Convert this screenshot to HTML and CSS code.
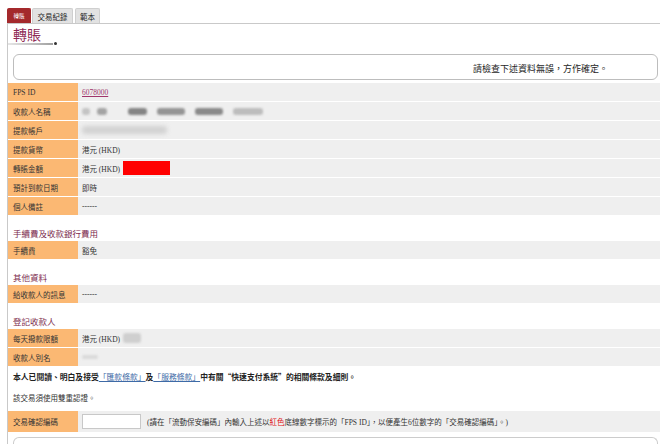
FILE: index.html
```html
<!DOCTYPE html>
<html lang="zh-Hant">
<head>
<meta charset="utf-8">
<title>轉賬</title>
<link rel="stylesheet" href="styles.css">
</head>
<body>
<div class="tabs">
  <span class="tab tab-active">轉賬</span>
  <span class="tab tab-history">交易紀錄</span>
  <span class="tab tab-template">範本</span>
</div>
<div class="panel">
  <h1 class="title">轉賬</h1>
  <div class="title-rule"><span class="rule-line"></span><span class="rule-dot"></span></div>
  <div class="notice">請檢查下述資料無誤，方作確定。</div>

  <div class="rows">
    <div class="row"><div class="label">FPS ID</div><div class="value"><a class="fps" href="#">6078000</a></div></div>
    <div class="row"><div class="label">收款人名稱</div><div class="value">
      <span class="blk n1"></span><span class="blk n2"></span><span class="blk n3"></span><span class="blk n4"></span><span class="blk n5"></span><span class="blk n6"></span>
    </div></div>
    <div class="row"><div class="label">提款帳戶</div><div class="value"><span class="blk acct"></span></div></div>
    <div class="row"><div class="label">提款貨幣</div><div class="value">港元 (HKD)</div></div>
    <div class="row"><div class="label">轉賬金額</div><div class="value">港元 (HKD)<span class="amount"></span></div></div>
    <div class="row"><div class="label">預計到款日期</div><div class="value">即時</div></div>
    <div class="row"><div class="label">個人備註</div><div class="value">------</div></div>
  </div>

  <h2 class="section">手續費及收款銀行費用</h2>
  <div class="rows">
    <div class="row"><div class="label">手續費</div><div class="value">豁免</div></div>
  </div>

  <h2 class="section">其他資料</h2>
  <div class="rows">
    <div class="row"><div class="label">給收款人的訊息</div><div class="value">------</div></div>
  </div>

  <h2 class="section">登記收款人</h2>
  <div class="rows">
    <div class="row"><div class="label">每天撥款限額</div><div class="value">港元 (HKD)<span class="blk limit"></span></div></div>
    <div class="row"><div class="label">收款人別名</div><div class="value"><span class="blk alias"></span></div></div>
  </div>

  <p class="statement">本人已閱讀、明白及接受<a class="terms" href="#">「匯款條款」</a>及<a class="terms" href="#">「服務條款」</a>中有關“快速支付系統”的相關條款及細則。</p>
  <p class="auth">該交易須使用雙重認證。</p>

  <div class="row row-code">
    <div class="label">交易確認編碼</div>
    <div class="value"><input class="code-input" type="text"><span class="hint">(請在「流動保安編碼」內輸入上述以<span class="red">紅色</span>底線數字標示的「FPS ID」，以便產生6位數字的「交易確認編碼」。)</span></div>
  </div>

  <div class="bottom-box"></div>
</div>
</body>
</html>
```
FILE: styles.css
```css
html, body {
  margin: 0;
  padding: 0;
  background: #ffffff;
}
body {
  font-family: "Liberation Serif", "Noto Sans CJK TC", serif;
  font-size: 7.5px;
  color: #333333;
  overflow: hidden;
}

/* tabs */
.tabs {
  display: flex;
  align-items: flex-end;
  margin: 8px 0 0 7px;
  height: 15px;
}
.tab {
  box-sizing: border-box;
  height: 15px;
  display: flex;
  align-items: center;
  justify-content: center;
  background: #e2e2e2;
  border: 1px solid #cfcfcf;
  border-bottom: none;
  border-radius: 2px 2px 0 0;
  font-family: "Noto Sans CJK TC", sans-serif;
  font-size: 7.5px;
  color: #222222;
}
.tab-active {
  width: 24px;
  background: #a4292c;
  border-color: #a4292c;
  color: #ffffff;
  font-size: 5.5px;
}
.tab-history {
  width: 41px;
  margin-left: 1px;
}
.tab-template {
  width: 25px;
  margin-left: 2px;
}

/* panel */
.panel {
  margin-left: 7px;
  border-left: 1px solid #c9c9c9;
  border-top: 1px solid #c9c9c9;
}
.title {
  margin: 0;
  padding: 2px 0 0 5px;
  font-family: "Noto Sans CJK TC", sans-serif;
  font-weight: normal;
  font-size: 14px;
  line-height: 16px;
  color: #8e2a55;
}
.title-rule {
  display: flex;
  align-items: center;
  height: 3px;
}
.rule-line {
  width: 45px;
  height: 2px;
  background: linear-gradient(to right, #e6e6e6, #a0a0a0);
}
.rule-dot {
  width: 3px;
  height: 3px;
  border-radius: 50%;
  background: #333333;
  margin-left: 1px;
}
.notice {
  box-sizing: border-box;
  margin: 9px 2px 0 5px;
  height: 26px;
  border: 1px solid #bdbdbd;
  border-radius: 6px;
  display: flex;
  align-items: center;
  justify-content: flex-end;
  padding: 2px 49px 0 0;
  font-family: "Noto Sans CJK TC", sans-serif;
  font-size: 9px;
  color: #1e1e1e;
}

/* rows */
.rows {
  display: flex;
  flex-direction: column;
  gap: 1px;
}
.notice + .rows {
  margin-top: 3px;
}
.row {
  display: flex;
  height: 18px;
}
.label {
  box-sizing: border-box;
  width: 70px;
  flex: none;
  background: #fbb873;
  padding-left: 5px;
  display: flex;
  align-items: center;
  font-family: "Noto Sans CJK TC", sans-serif;
  font-size: 7.5px;
  color: #333333;
  white-space: nowrap;
}
.row .label:first-child {
  font-family: "Liberation Serif", "Noto Sans CJK TC", serif;
}
.value {
  flex: 1;
  background: #efefef;
  display: flex;
  align-items: center;
  padding-left: 4px;
  white-space: nowrap;
  color: #333333;
}
.fps {
  color: #a0346a;
  text-decoration: underline;
}

/* redacted blocks */
.blk {
  display: inline-block;
  height: 7px;
  border-radius: 3px;
  filter: blur(0.8px);
}
.n1 { width: 8px; background: #c4c4c4; }
.n2 { width: 10px; margin-left: 7px; background: #a4a4a4; }
.n3 { width: 19px; margin-left: 21px; background: #858585; }
.n4 { width: 28px; margin-left: 10px; background: #959595; }
.n5 { width: 28px; margin-left: 10px; background: #8a8a8a; }
.n6 { width: 30px; margin-left: 10px; background: #bdbdbd; }
.acct {
  width: 85px;
  height: 8px;
  background: #d2d2d2;
  filter: blur(2px);
}
.amount {
  display: inline-block;
  width: 47px;
  height: 14px;
  margin-left: 3px;
  background: #ff0000;
}
.limit {
  width: 18px;
  height: 10px;
  margin-left: 3px;
  background: #cfcfcf;
}
.alias {
  width: 16px;
  height: 4px;
  background: #dadada;
}

/* section headings */
.section {
  margin: 0;
  padding: 12px 0 2px 5px;
  line-height: 12px;
  font-family: "Noto Sans CJK TC", sans-serif;
  font-weight: normal;
  font-size: 8.5px;
  color: #7d2b4d;
}

/* statements */
.statement {
  margin: 0;
  padding: 5px 0 0 5px;
  line-height: 12px;
  font-family: "Noto Sans CJK TC", sans-serif;
  font-weight: bold;
  font-size: 7.8px;
  color: #222222;
  white-space: nowrap;
}
.terms {
  font-weight: normal;
  color: #3e6aa6;
  text-decoration: underline;
}
.auth {
  margin: 0;
  padding: 9px 0 0 5px;
  line-height: 12px;
  font-family: "Noto Sans CJK TC", sans-serif;
  font-size: 7.5px;
  color: #333333;
}

/* confirmation code row */
.row-code {
  height: 21px;
  margin-top: 7px;
}
.code-input {
  box-sizing: border-box;
  width: 59px;
  height: 15px;
  margin: 0;
  padding: 0;
  border: 1px solid #c8c8c8;
  background: #ffffff;
}
.hint {
  margin-left: 6px;
  font-family: "Liberation Serif", "Noto Sans CJK TC", serif;
  font-size: 7.5px;
  color: #333333;
}
.red {
  color: #e0161b;
}

.bottom-box {
  height: 6px;
  margin: 5px 2px 0 5px;
  border: 1px solid #cccccc;
  border-bottom: none;
  border-radius: 6px 6px 0 0;
}
```
